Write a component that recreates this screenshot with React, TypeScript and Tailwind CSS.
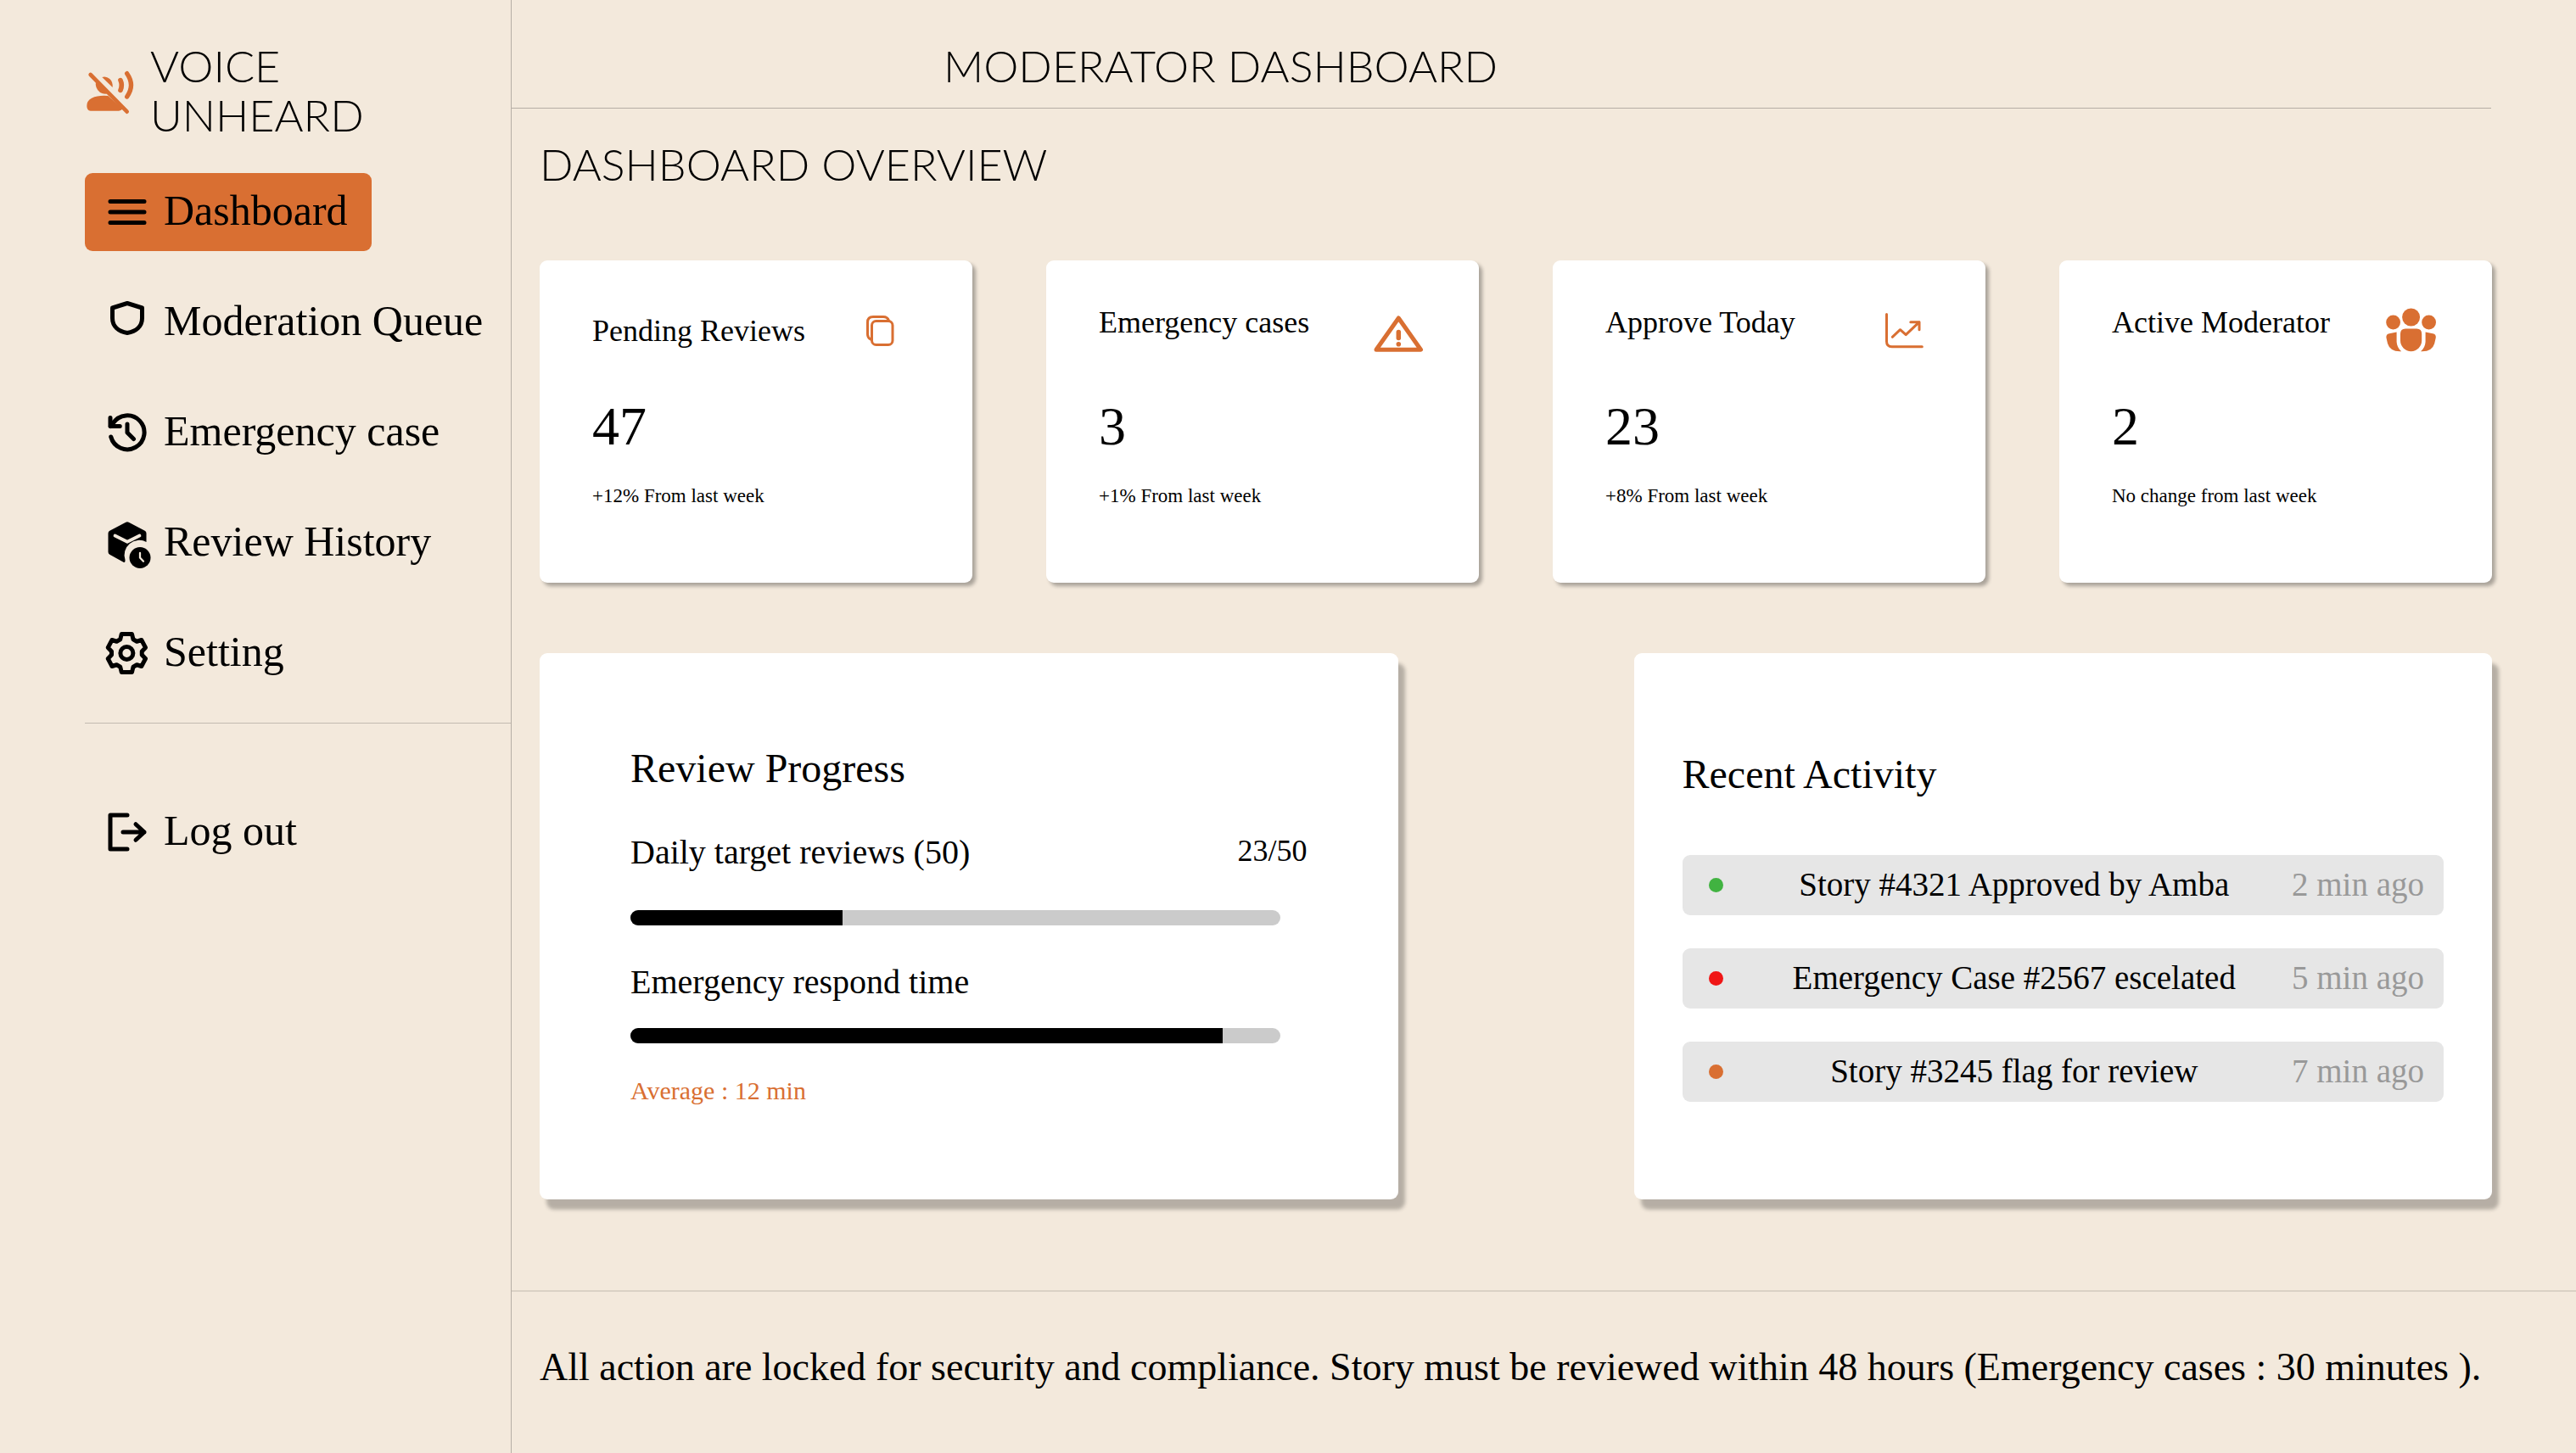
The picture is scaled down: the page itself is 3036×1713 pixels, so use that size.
import React from "react";

const ICON = "h-[60px] w-[60px] shrink-0";

function NavIcon({ children }: { children: React.ReactNode }) {
  return (
    <svg viewBox="0 0 24 24" className={ICON} fill="none" stroke="currentColor" strokeWidth="2" strokeLinecap="round" strokeLinejoin="round" aria-hidden="true">
      {children}
    </svg>
  );
}

function CardIcon({ children }: { children: React.ReactNode }) {
  return (
    <svg viewBox="0 0 60 60" className="h-[60px] w-[60px] shrink-0 text-[#d96f32]" fill="none" stroke="currentColor" strokeWidth="3" strokeLinecap="round" strokeLinejoin="round" aria-hidden="true">
      {children}
    </svg>
  );
}

const navItems = [
  { label: "Dashboard", icon: <path d="M4 7h16M4 12h16M4 17h16" /> },
  { label: "Moderation Queue", icon: <path d="M12 3l7 2.200V10c0 4-3 6.300-7 7-4-.7-7-3-7-7V5.200z" /> },
  {
    label: "Emergency case",
    icon: <path d="M4.300 14A8 8 0 1 0 5.300 7.600L4 9M4 5v4h4.500M12 8v4l3 3" />,
  },
  {
    label: "Review History",
    icon: (
      <>
        <path d="M11.300 2.300q.7-.4 1.400 0l7.600 4q.7.400.7 1.200v4.100a7 7 0 0 0-10 8.400v.500q0 .9-.8.600L3.700 17.500q-.7-.4-.7-1.200V7.500q0-.8.7-1.200z" fill="currentColor" stroke="none" />
        <path d="M6.200 8.600L12 11.500l5.800-2.900" stroke="#f3e9dc" strokeWidth="1.500" />
        <circle cx="18" cy="19" r="5" fill="currentColor" stroke="none" />
        <path d="M18 16.700V19l1.600 1.700" stroke="#f3e9dc" strokeWidth="0.900" />
      </>
    ),
  },
  {
    label: "Setting",
    icon: (
      <>
        <path d="M9.300 3H14.200L14.800 5.500L16.500 6.500L18.700 5.800L20.600 9.400L18.900 11.200V12.800L20.600 14.600L18.700 18.200L16.500 17.500L14.800 18.500L14.200 21H9.300L8.700 18.500L7 17.500L4.800 18.200L2.900 14.600L4.600 12.800V11.200L2.900 9.400L4.800 5.800L7 6.500L8.700 5.500Z" />
        <circle cx="11.750" cy="12" r="3" />
      </>
    ),
  },
];

const stats = [
  {
    title: "Pending Reviews",
    value: "47",
    note: "+12% From last week",
    header: "items-center",
    icon: (
      <>
        <path d="M5 40Q1.500 38 1.500 34V20Q1.500 13.500 8 13.500H20Q25 13.500 26.500 18" />
        <rect x="6.500" y="18.500" width="24.500" height="28" rx="5" />
      </>
    ),
  },
  {
    title: "Emergency cases",
    value: "3",
    note: "+1% From last week",
    header: "items-start",
    icon: (
      <>
        <path d="M30.300 15L56.500 52.300H4Z" strokeWidth="5" />
        <path d="M30.300 31.500v7" strokeWidth="5.500" />
        <circle cx="30.300" cy="45.700" r="2.800" fill="currentColor" stroke="none" />
      </>
    ),
  },
  {
    title: "Approve Today",
    value: "23",
    note: "+8% From last week",
    header: "items-start",
    icon: <path d="M8.500 10.500V42.500Q8.500 48.700 14.700 48.700H50.300M15.300 37.300L24.500 28.700L31.200 34.700L47 19.700M36.800 19.700H47V28.700" />,
  },
  {
    title: "Active Moderator",
    value: "2",
    note: "No change from last week",
    header: "items-start",
    icon: (
      <g fill="currentColor" stroke="none">
        <circle cx="29.600" cy="14" r="10.500" />
        <circle cx="8.600" cy="20" r="8.400" />
        <circle cx="50.600" cy="20" r="8.400" />
        <path d="M23 27.500H36.200Q42.200 27.500 42.200 33.500V41.600A12.600 12.600 0 0 1 17 41.600V33.500Q17 27.500 23 27.500Z" />
        <path d="M12.600 31.500V43Q13 50 18.200 54.200Q5 55 2 45L.4 38Q0 34 4 33.300Z" />
        <path d="M46.600 31.500V43Q46.200 50 41 54.200Q54.200 55 57.200 45L58.800 38Q59.200 34 55.200 33.300Z" />
      </g>
    ),
  },
];

const activities = [
  { text: "Story #4321 Approved by Amba", time: "2 min ago", dot: "bg-[#41b341]" },
  { text: "Emergency Case #2567 escelated", time: "5 min ago", dot: "bg-[#f01616]" },
  { text: "Story #3245 flag for review", time: "7 min ago", dot: "bg-[#d96f32]" },
];

function Bar({ label, value }: { label: string; value: number }) {
  return (
    <div role="progressbar" aria-label={label} aria-valuenow={value} aria-valuemin={0} aria-valuemax={100} className="mr-8 h-[18px] overflow-hidden rounded-full bg-[#cbcbcb]">
      <div className="h-full bg-black" style={{ width: `${value}%` }} />
    </div>
  );
}

export default function App() {
  return (
    <div className="flex min-h-screen bg-[#f3e9dc] font-['Liberation_Serif',serif] text-black">
      <aside className="w-[603px] shrink-0 border-r border-black/25 pl-[100px]">
        <div className="flex items-center pt-12">
          <svg viewBox="30 18 180 180" className={ICON} fill="none" stroke="#d96f32" strokeWidth="14" strokeLinecap="round" aria-hidden="true">
            <path d="M50 54L179 185" />
            <g fill="#d96f32" stroke="none">
              <path d="M91 63Q105 58 118 69Q130 80 128 99Z" />
              <path d="M69 76L114 120Q98 125 84 117Q65 104 69 76Z" />
              <path d="M112 129L164 175Q158 182 150 182H50Q37 181 37 165Q36 147 54 137Q78 126 112 129Z" />
            </g>
            <path d="M156 74Q164 91 156 109" strokeWidth="17" />
            <path d="M179 50Q208 91 179 132" strokeWidth="16" />
          </svg>
          <p className="ml-[17px] font-['Lato',sans-serif] text-[52px] font-light leading-[58px]">
            VOICE
            <br />
            UNHEARD
          </p>
        </div>
        <nav aria-label="Main" className="mt-10 flex flex-col items-start gap-[38px]">
          {navItems.map((item, i) => (
            <a
              key={item.label}
              href="#"
              aria-current={i === 0 ? "page" : undefined}
              className={`flex h-[92px] items-center gap-[13px] rounded-[9px] pl-5 pr-7 ${i === 0 ? "bg-[#d96f32]" : ""}`}
            >
              <NavIcon>{item.icon}</NavIcon>
              <span className="whitespace-nowrap pb-1 text-[50px] leading-[60px]">{item.label}</span>
            </a>
          ))}
        </nav>
        <div className="mt-9 border-t border-black/20 pt-[82px]">
          <button type="button" className="flex h-[92px] cursor-pointer items-center gap-[13px] pl-5">
            <NavIcon>
              <path d="M12 4H4v16h8M10 12h10M16 8.300l4 3.700-4 3.700" />
            </NavIcon>
            <span className="pb-1 text-[50px] leading-[60px]">Log out</span>
          </button>
        </div>
      </aside>

      <div className="flex min-w-0 flex-1 flex-col">
        <header className="mr-[100px] border-b border-black/25 pb-[21px] pl-[509px] pt-12">
          <h1 className="font-['Lato',sans-serif] text-[52px] font-light leading-[58px]">MODERATOR DASHBOARD</h1>
        </header>

        <main className="pl-[33px] pr-[99px]">
          <h2 className="mt-9 font-['Lato',sans-serif] text-[52px] font-light leading-[58px]">DASHBOARD OVERVIEW</h2>

          <section className="mt-[85px] grid grid-cols-4 gap-[87px]">
            {stats.map((s) => (
              <article key={s.title} className="rounded-[9px] bg-white pb-[87px] pl-[62px] pr-[65px] pt-[53px] shadow-[4px_4px_4px_rgba(0,0,0,0.3)]">
                <div className={`flex justify-between ${s.header}`}>
                  <h3 className="whitespace-nowrap text-[36px] leading-[40px]">{s.title}</h3>
                  <CardIcon>{s.icon}</CardIcon>
                </div>
                <p className="mt-[51px] text-[64px] leading-[64px]">{s.value}</p>
                <p className="mt-[35px] text-[23px] leading-[30px]">{s.note}</p>
              </article>
            ))}
          </section>

          <section className="mt-[83px] grid grid-cols-2 gap-[278px]">
            <article className="rounded-[9px] bg-white px-[107px] pb-[110px] pt-[108px] shadow-[8px_12px_4px_rgba(0,0,0,0.25)]">
              <h3 className="text-[48px] leading-[56px]">Review Progress</h3>
              <div className="mb-[42px] mt-[45px] flex items-center justify-between leading-[48px]">
                <p className="text-[40px]">Daily target reviews (50)</p>
                <p className="pb-1 text-[36px]">23/50</p>
              </div>
              <Bar label="Daily target reviews" value={32.7} />
              <p className="mb-[30px] mt-[43px] text-[40px] leading-[48px]">Emergency respond time</p>
              <Bar label="Emergency respond time" value={91.2} />
              <p className="mt-[38px] text-[30px] leading-[36px] text-[#d96f32]">Average : 12 min</p>
            </article>

            <article className="rounded-[9px] bg-white px-[57px] pb-[110px] pt-[115px] shadow-[8px_12px_4px_rgba(0,0,0,0.25)]">
              <h3 className="text-[48px] leading-[56px]">Recent Activity</h3>
              <ul className="mt-[67px] flex flex-col gap-[39px]">
                {activities.map((a) => (
                  <li key={a.text} className="flex h-[71px] items-center rounded-[9px] bg-[#e6e6e6] pl-[31px] pr-[23px] text-[39px] leading-[48px]">
                    <span className={`h-[17px] w-[17px] shrink-0 rounded-full ${a.dot}`} />
                    <span className="flex-1 whitespace-nowrap pb-0.5 pl-4 text-center">{a.text}</span>
                    <span className="whitespace-nowrap pb-0.5 text-[#999999]">{a.time}</span>
                  </li>
                ))}
              </ul>
            </article>
          </section>
        </main>

        <footer className="mt-[107px] border-t-2 border-black/10 pb-[70px] pl-[33px] pt-[59px]">
          <p className="text-[46px] leading-[60px]">
            All action are locked for security and compliance. Story must be reviewed within 48 hours (Emergency cases : 30 minutes ).
          </p>
        </footer>
      </div>
    </div>
  );
}
